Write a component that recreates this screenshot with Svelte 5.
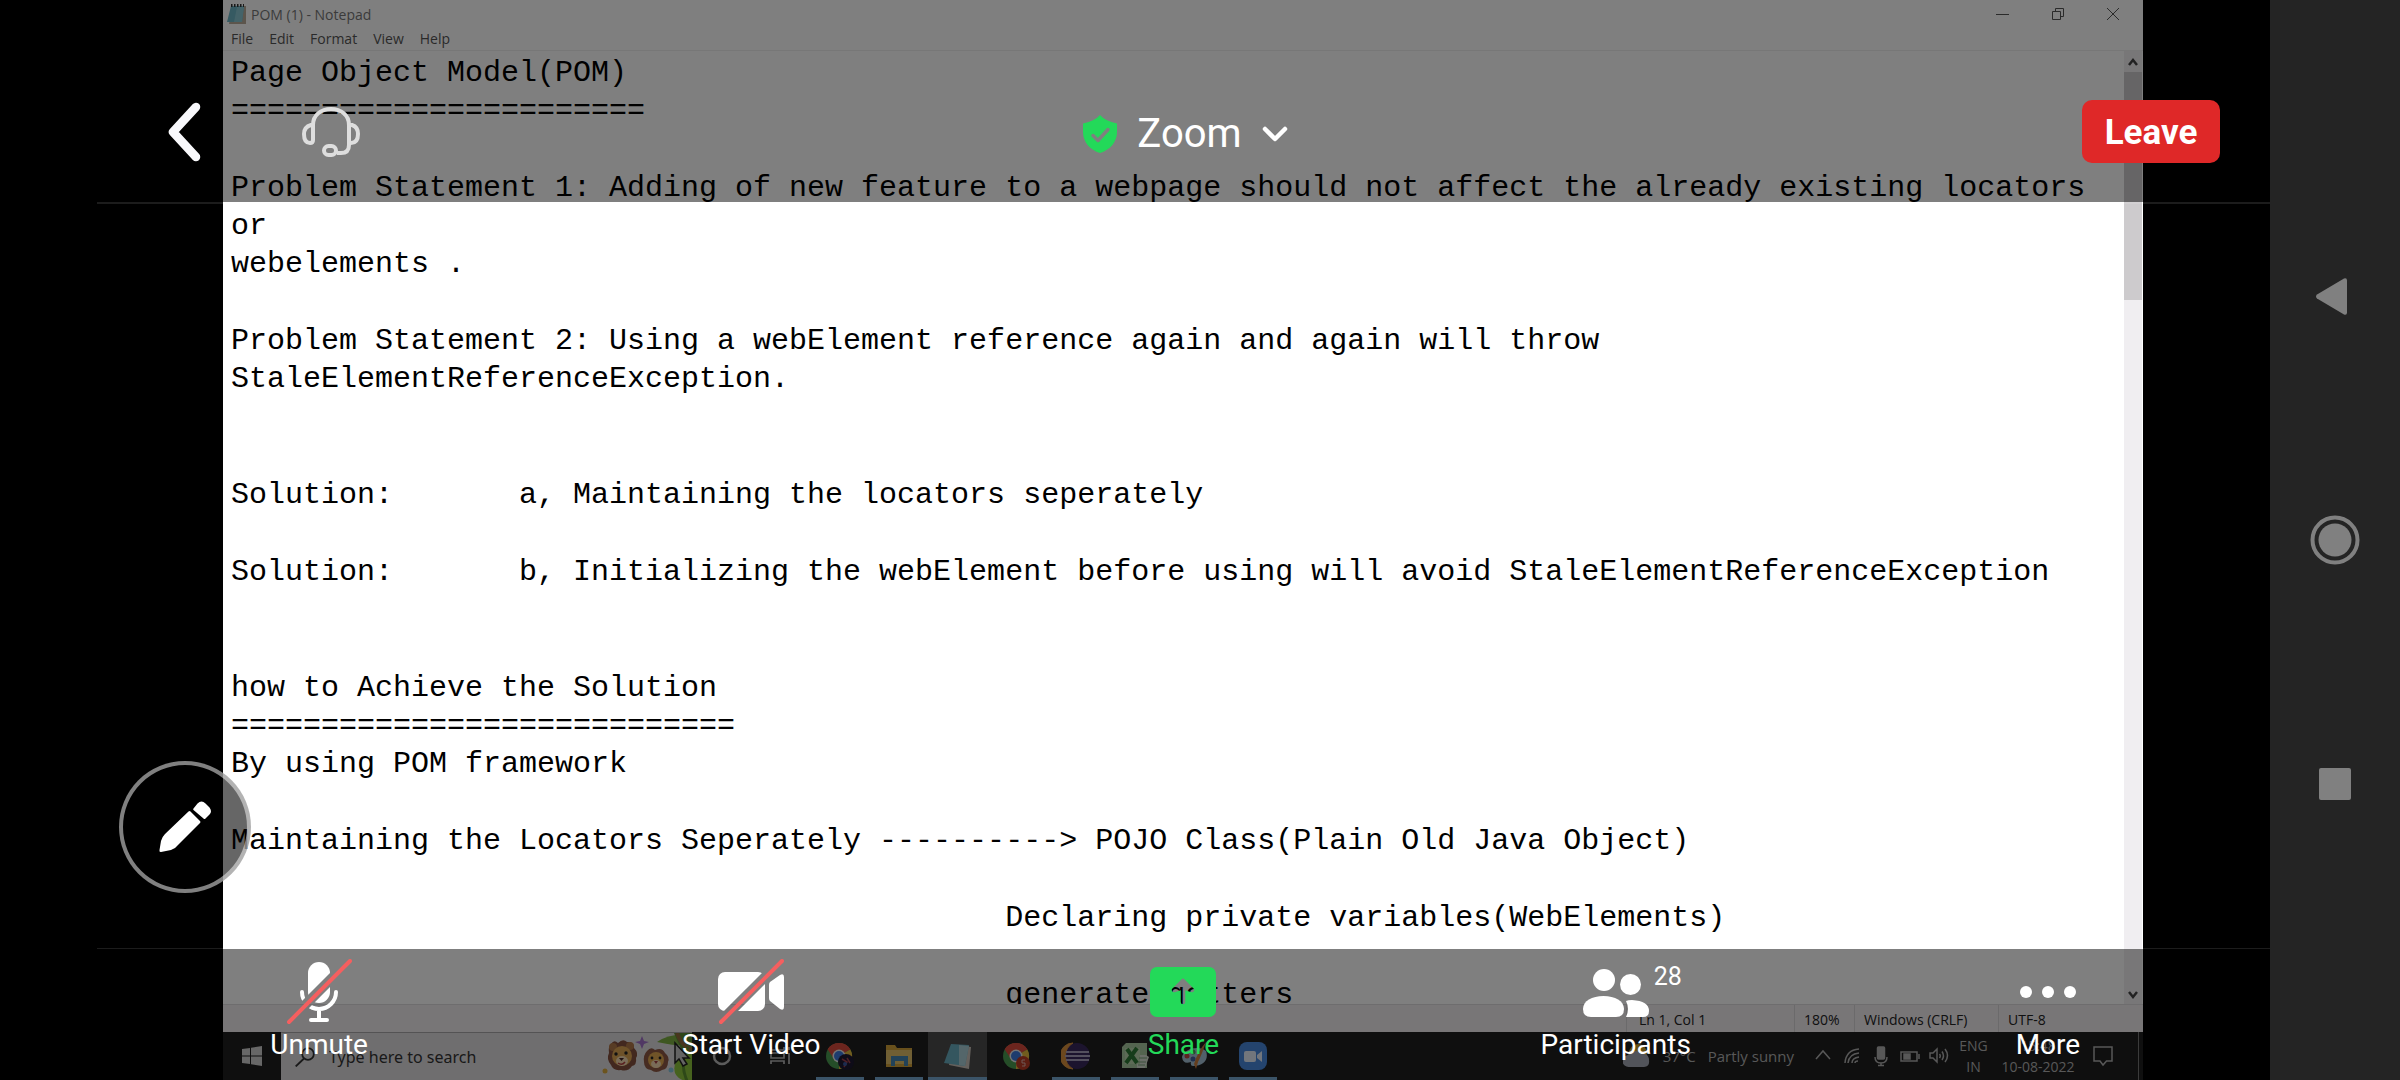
<script>
  const blocks = [
    { lines: ['Page Object Model(POM)', '='.repeat(23)] },
    {
      lines: [
        'Problem Statement 1: Adding of new feature to a webpage should not affect the already existing locators',
        'or',
        'webelements .'
      ]
    },
    {
      lines: [
        'Problem Statement 2: Using a webElement reference again and again will throw',
        'StaleElementReferenceException.'
      ]
    },
    { wide: true, lines: ['Solution:       a, Maintaining the locators seperately'] },
    {
      lines: [
        'Solution:       b, Initializing the webElement before using will avoid StaleElementReferenceException'
      ]
    },
    { wide: true, lines: ['how to Achieve the Solution', '='.repeat(28), 'By using POM framework'] },
    { lines: ['Maintaining the Locators Seperately ----------> POJO Class(Plain Old Java Object)'] },
    { lines: [' '.repeat(43) + 'Declaring private variables(WebElements)'] },
    { lines: [' '.repeat(43) + 'generate getters'] }
  ];
  const menus = ['File', 'Edit', 'Format', 'View', 'Help'];
</script>

{#snippet chrome()}
  <circle cx="14" cy="14" r="13" fill="#4a9a50" />
  <path d="M14 14L2.700 7.500A13 13 0 0 1 25.300 7.500Z" fill="#d84a3c" />
  <path d="M14 14L25.300 7.500A13 13 0 0 1 14 27Z" fill="#e2b93c" />
  <path d="M14 8H25.500A13 13 0 0 0 2.700 7.500L9 17Z" fill="#d84a3c" />
  <circle cx="14" cy="14" r="6.500" fill="#e8e8e8" />
  <circle cx="14" cy="14" r="5" fill="#3c78dc" />
{/snippet}

<div class="device">
  <div class="stage">
    <div class="desktop">
      <section class="notepad" aria-label="Notepad">
        <header class="titlebar">
          <svg class="app-icon" width="19" height="20" viewBox="0 0 19 20" aria-hidden="true">
            <path d="M5 2h14v18H2z" fill="#b8aa98" />
            <path d="M4 2h13l-2 16H0z" fill="#6cb4c4" />
            <path d="M10 3h7l-2 15H7z" fill="#88c6d2" />
            <path d="M4 1.500h13" stroke="#333" stroke-width="3" stroke-dasharray="1.500 1.500" />
          </svg>
          <span class="title">POM (1) - Notepad</span>
          <div class="window-buttons">
            <button aria-label="Minimize"><svg width="14" height="14" viewBox="0 0 14 14"><path d="M0 7.500h13" /></svg></button>
            <button aria-label="Restore"><svg width="14" height="14" viewBox="0 0 14 14"><path d="M1.500 4.500h8v8h-8zM4.500 4V1.500h8v8H10" /></svg></button>
            <button aria-label="Close"><svg width="14" height="14" viewBox="0 0 14 14"><path d="M1 1l12 12M13 1L1 13" /></svg></button>
          </div>
        </header>
        <nav class="menubar">
          {#each menus as m}<button>{m}</button>{/each}
        </nav>
        <div class="editor">
          <article class="document">
            {#each blocks as b}
              <div class="block" class:wide={b.wide}>
                {#each b.lines as line}<p>{line}</p>{/each}
              </div>
            {/each}
          </article>
          <div class="scrollbar">
            <svg width="18" height="21" viewBox="0 0 18 21"><path d="M5 14l4-5 4 5" /></svg>
            <div class="thumb"></div>
            <svg width="18" height="21" viewBox="0 0 18 21"><path d="M5 9l4 5 4-5" /></svg>
          </div>
        </div>
        <footer class="statusbar">
          <span class="position">Ln 1, Col 1</span>
          <span class="zoom-level">180%</span>
          <span class="ending">Windows (CRLF)</span>
          <span class="encoding">UTF-8</span>
        </footer>
      </section>

      <section class="taskbar" aria-label="Taskbar">
        <button class="start" aria-label="Start">
          <svg width="20" height="20" viewBox="0 0 20 20"><path d="M0 3l8-1v7.500H0zM9 1.800L20 0v9.500H9zM0 10.500h8V18l-8-1zM9 10.500h11V20L9 18.200z" fill="#cfcfcf" /></svg>
        </button>
        <div class="search">
          <svg width="20" height="20" viewBox="0 0 20 20" fill="none" stroke="#333" stroke-width="1.800"><circle cx="13" cy="7" r="5.800" /><path d="M9 11.500L.7 19.500" /></svg>
          <input type="text" aria-label="Search" placeholder="Type here to search" />
          <svg class="lions" width="90" height="48" viewBox="0 0 90 48" aria-hidden="true">
            <path d="M55 9Q70-1 90 3V12Q78 14 55 9Z" fill="#7cae42" />
            <path d="M72 0l7 16 11 10V0z" fill="#5c8c34" />
            <path d="M75 0q4 12 15 17" stroke="#936c3c" stroke-width="4" fill="none" />
            <path d="M90 20Q69 24 73 40q4 9 17 8z" fill="#8cc43c" />
            <path d="M86 14q-9 15-1 34" stroke="#5c9030" stroke-width="3" fill="none" />
            <path d="M9 11q3-5 7-1 5-5 9-1 7-1 7 6 5 5 2 10 1 7-4 8-4 6-11 4-8 1-10-5-5-6-2-12-1-6 2-9z" fill="#84503e" />
            <circle cx="11" cy="14" r="4" fill="#b07848" /><circle cx="28" cy="13" r="4" fill="#b07848" />
            <ellipse cx="20" cy="23" rx="10" ry="10" fill="#dca452" />
            <ellipse cx="20" cy="28" rx="6" ry="5" fill="#f2d8b0" />
            <circle cx="14" cy="21" r="1.700" fill="#222" /><circle cx="24" cy="20" r="1.700" fill="#222" />
            <path d="M17 25h5l-2.500 3z" fill="#422" /><path d="M16 30q4 3 7-1" stroke="#b03c3c" stroke-width="1.500" fill="none" />
            <path d="M45 18q4-5 8-1 7-3 10 3 5 4 3 9 0 7-6 8-6 4-11 0-7-1-7-8-1-7 3-11z" fill="#8e5844" />
            <ellipse cx="54" cy="27" rx="8" ry="8" fill="#e0a850" />
            <ellipse cx="54" cy="31" rx="5" ry="4" fill="#f4d8b0" />
            <circle cx="50" cy="25" r="1.400" fill="#222" /><circle cx="58" cy="25" r="1.400" fill="#222" />
            <path d="M52 28h4l-2 3z" fill="#a03c3c" />
            <path d="M40 3l2 5 5 1-5 2-2 5-2-5-5-2 5-1z" fill="#a070c8" />
            <circle cx="3" cy="38" r="2.500" fill="#d8a83c" /><circle cx="69" cy="37" r="2.500" fill="#84c4dc" />
            <path d="M73 10v20l4-4 4 7 4-2-4-6h6z" fill="#c8c8c8" stroke="#222" stroke-width="1.500" />
          </svg>
        </div>
        <div class="apps">
          <button class="app" aria-label="Cortana"><svg width="28" height="28" viewBox="0 0 28 28"><circle cx="14" cy="14" r="8" fill="none" stroke="#b8b8b8" stroke-width="2.500" /></svg></button>
          <button class="app" aria-label="Task View"><svg width="28" height="28" viewBox="0 0 28 28" fill="none" stroke="#b8b8b8" stroke-width="1.700"><path d="M4 5v3h13V5M4 22v-3h13v3M4 11h13v5H4zM22 5v3M22 11v11" /></svg></button>
          <button class="app open" aria-label="Chrome"><svg width="30" height="28" viewBox="0 0 30 28">{@render chrome()}<circle cx="21" cy="20" r="8" fill="#1c1830" /><path d="M17 17l5 3-3 5M22 16l3 5" stroke="#9a3c4c" stroke-width="1.500" fill="none" /><circle cx="20" cy="22" r="2" fill="#3858a0" /></svg></button>
          <button class="app open" aria-label="File Explorer"><svg width="28" height="28" viewBox="0 0 28 28"><path d="M1 3h9l2 3h15v19H1z" fill="#d0a038" /><path d="M1 8h26v14H1z" fill="#e0be68" /><path d="M6 14h17v10h-4v-5h-9v5H6z" fill="#4484b0" /></svg></button>
          <button class="app open active" aria-label="Notepad"><svg width="30" height="28" viewBox="0 0 30 28"><path d="M9 3l19 2-2 22L6 23z" fill="#c8c0b8" /><path d="M8 2l18 1-4 21L1 21z" fill="#68acbe" /><path d="M16 3l10 1-4 20-6-1z" fill="#a8ccd4" /></svg></button>
          <button class="app" aria-label="Chrome, second profile"><svg width="30" height="28" viewBox="0 0 30 28">{@render chrome()}<circle cx="21" cy="21" r="7" fill="#b83a24" /><path d="M23 18h-3v3h3v3h-3" stroke="#ddb0a8" stroke-width="1" fill="none" /></svg></button>
          <button class="app open" aria-label="Eclipse"><svg width="30" height="28" viewBox="0 0 30 28"><circle cx="16" cy="14" r="13" fill="#38285c" /><path d="M12 1A13 13 0 0 0 12 27A15 15 0 0 1 12 1Z" fill="#d8903c" stroke="#d8903c" /><path d="M5 10h23M4 14h25M5 18h23" stroke="#a8a0bc" stroke-width="2" /></svg></button>
          <button class="app open" aria-label="Excel"><svg width="28" height="28" viewBox="0 0 28 28"><path d="M5 1h21v25H1V5z" fill="#a8c8a0" /><path d="M16 13h9l3 2-4 11h-8z" fill="#d4dcd0" /><path d="M4 6h15v16H4z" fill="#b8d4ac" /><path d="M6 7l10 14M16 6L5 21" stroke="#2c7834" stroke-width="4" /><path d="M18 16h8M17 20h8M17 23h7" stroke="#78a078" /></svg></button>
          <button class="app open" aria-label="Paint"><svg width="28" height="28" viewBox="0 0 28 28"><path d="M2 15C4 6 20 3 26 9c3 8-2 15-13 15q-3 0-2-4-8 3-9-5z" fill="#a4c0d4" /><circle cx="7" cy="14" r="2.500" fill="#b84840" /><circle cx="13" cy="10" r="2.500" fill="#50945c" /><circle cx="13" cy="17" r="2.500" fill="#40609c" /><path d="M26 0q-4 12-8 20l-2 7-2-5Q18 9 26 0z" fill="#c87c3c" /></svg></button>
          <button class="app open" aria-label="Zoom"><svg width="28" height="28" viewBox="0 0 28 28"><rect width="28" height="28" rx="8" fill="#4888dc" /><rect x="5" y="9" width="12" height="11" rx="2" fill="#e4ecf8" /><path d="M18 13l5-4v11l-5-4z" fill="#e4ecf8" /></svg></button>
        </div>
        <div class="tray">
          <button class="weather">
            <svg width="28" height="24" viewBox="0 0 28 24"><circle cx="15" cy="9" r="9" fill="#c8a028" /><path d="M6 23a6 6 0 0 1-1-12 8 8 0 0 1 13-1 6 6 0 0 1 8 6q1 7-5 7z" fill="#a4a8b4" /></svg>
            <span>37°C</span><span>Partly sunny</span>
          </button>
          <button class="tray-icon" aria-label="Hidden icons"><svg width="20" height="22" viewBox="0 0 20 22"><path d="M3 14l7-8 7 8" /></svg></button>
          <button class="tray-icon" aria-label="Network"><svg width="20" height="22" viewBox="0 0 20 22"><path d="M3 18Q4 5 17 4M6 18Q7 9 17 8M10 18Q10 13 17 12M13 18q0-2 3-2" /></svg></button>
          <button class="tray-icon" aria-label="Microphone"><svg width="20" height="22" viewBox="0 0 20 22"><rect x="6.500" y="2" width="7" height="12" rx="1" fill="#b0b0b0" /><path d="M4 12q0 6 6 6t6-6M10 18v3M7 20.500h6" /></svg></button>
          <button class="tray-icon" aria-label="Battery"><svg width="20" height="22" viewBox="0 0 20 22"><path d="M1 7h16v9H1zM19 9v5" /><rect x="4" y="9" width="6" height="5" fill="#b0b0b0" /></svg></button>
          <button class="tray-icon" aria-label="Volume"><svg width="20" height="22" viewBox="0 0 20 22"><path d="M1 8v5h3l4 4V4L4 8zM10.500 9q1.500 2 0 4M13 6.500q3 4.500 0 8.500M16 4q5 6.500 0 13" /></svg></button>
          <div class="stack lang"><span>ENG</span><span>IN</span></div>
          <div class="stack clock"><span>15:48</span><span>10-08-2022</span></div>
          <button class="notifications" aria-label="Notifications"><svg width="20" height="22" viewBox="0 0 20 22"><path d="M1 2h18v14h-5.500L10 20l-3-4H1z" /></svg></button>
          <button class="show-desktop" aria-label="Show desktop"></button>
        </div>
      </section>
    </div>

    <header class="meeting-top">
      <div class="top-left">
        <button aria-label="Back">
          <svg width="34" height="60" viewBox="0 0 34 60"><path d="M28 5L5 30l23 25" fill="none" stroke="#f8f8fb" stroke-width="8.500" stroke-linecap="round" stroke-linejoin="round" /></svg>
        </button>
        <button aria-label="Audio source">
          <svg width="58" height="50" viewBox="0 0 58 50" fill="none" stroke="#dedede" stroke-width="4" stroke-linejoin="round">
            <path d="M11 18C11 8 19 2 29 2s18 6 18 16v20q0 8-8 8h-4" />
            <path d="M11 18H9q-7 2-7 9 0 9 6 9 3 0 3-3zM47 18h3q6 2 6 9 0 9-7 9h-2z" />
            <rect x="22" y="39" width="12" height="9" rx="4.500" />
          </svg>
        </button>
      </div>
      <button class="meeting-title">
        <svg width="34" height="38" viewBox="0 0 34 38">
          <mask id="shield-check"><rect width="34" height="38" fill="#fff" /><path d="M10 20.500l5 5L25 14.500" fill="none" stroke="#000" stroke-width="3.500" stroke-linecap="round" stroke-linejoin="round" /></mask>
          <path d="M17 0Q22 6 34 8.500V17C34 27 27 35 17 38 7 35 0 27 0 17V8.500Q12 6 17 0Z" fill="#23d959" mask="url(#shield-check)" />
        </svg>
        <span>Zoom</span>
        <svg width="26" height="18" viewBox="0 0 26 18"><path d="M3 4l10 10L23 4" fill="none" stroke="#fff" stroke-width="4.500" stroke-linecap="round" stroke-linejoin="round" /></svg>
      </button>
      <div class="top-right"><button class="leave">Leave</button></div>
    </header>

    <button class="annotate" aria-label="Annotate">
      <svg width="52" height="52" viewBox="0 0 52 52" fill="#fff">
        <path d="M29.500 10.500q1-1 2 0l9.500 9.500q1 1 0 2L19 44q-3 4-7 5L2 51q-2 .3-1.500-2L2 40q1-4 4-7z" />
        <path d="M34.500 7.500l4-5q4-4 8 0l4 4q3 4 0 7l-4 4q-1 1-2 0l-10-8.500q-.7-.7 0-1.500z" />
      </svg>
    </button>

    <nav class="meeting-bottom" aria-label="Meeting controls">
      <button>
        <svg width="66" height="66" viewBox="0 0 66 66">
          <mask id="mic-cut"><rect width="66" height="66" fill="#fff" /><path d="M-3 68L69-4" stroke="#000" stroke-width="10" /></mask>
          <g mask="url(#mic-cut)">
            <rect x="22" y="3" width="22" height="41" rx="11" fill="#fff" />
            <path d="M16 33a17 17 0 0 0 34 0M33 50v10M25 61h16" fill="none" stroke="#fff" stroke-width="4" stroke-linecap="round" />
          </g>
          <path d="M3 63L64 2" stroke="#f55f5f" stroke-width="4" stroke-linecap="round" />
        </svg>
        <span>Unmute</span>
      </button>
      <button>
        <svg width="66" height="66" viewBox="0 0 66 66">
          <mask id="video-cut"><rect width="66" height="66" fill="#fff" /><path d="M-3 68L69-4" stroke="#000" stroke-width="10" /></mask>
          <rect y="13" width="47" height="39" rx="7" fill="#fff" mask="url(#video-cut)" />
          <path d="M52 23l10-7q4-2 4 2v30q0 4-4 2l-10-8q-1-1-1-3V26q0-2 1-3z" fill="#fff" />
          <path d="M3 63L64 2" stroke="#f55f5f" stroke-width="4" stroke-linecap="round" />
        </svg>
        <span>Start Video</span>
      </button>
      <button class="share">
        <svg width="66" height="66" viewBox="0 0 66 66">
          <mask id="arrow-cut"><rect width="66" height="66" fill="#fff" /><path d="M33 30v13M33 22l9 9-9-3-9 3z" fill="#000" stroke="#000" stroke-width="4.500" stroke-linecap="round" stroke-linejoin="round" /></mask>
          <rect y="8" width="66" height="50" rx="7" fill="#23d959" mask="url(#arrow-cut)" />
        </svg>
        <span>Share</span>
      </button>
      <button class="participants">
        <svg width="66" height="66" viewBox="0 0 66 66" fill="#fff">
          <circle cx="21" cy="21" r="11" /><circle cx="47.500" cy="25.500" r="10.500" />
          <path d="M0 50C0 42 9 37 20.500 37S41 42 41 50q0 8-8 8H8q-8 0-8-8z" />
          <path d="M43 42q2-1 6-1 17 1 17 11 0 6-6 6H43q4-8 0-16z" />
        </svg>
        <span class="count">28</span>
        <span>Participants</span>
      </button>
      <button>
        <svg width="66" height="66" viewBox="0 0 66 66" fill="#fff"><circle cx="11" cy="33" r="6" /><circle cx="33" cy="33" r="6" /><circle cx="55" cy="33" r="6" /></svg>
        <span>More</span>
      </button>
    </nav>
  </div>

  <aside class="system-nav" aria-label="System navigation">
    <button aria-label="Back"><svg width="50" height="50" viewBox="0 0 50 50" fill="#808080"><path d="M7 23.500L34 7.500q3-1 3 2v32q0 3-3 2L7 27.500q-2-2 0-4z" /></svg></button>
    <button aria-label="Home"><svg width="50" height="50" viewBox="0 0 50 50"><circle cx="25" cy="25" r="22.500" fill="none" stroke="#808080" stroke-width="4" /><circle cx="25" cy="25" r="16.500" fill="#808080" /></svg></button>
    <button aria-label="Recent apps"><svg width="50" height="50" viewBox="0 0 50 50"><rect x="9" y="9" width="32" height="32" rx="2" fill="#808080" /></svg></button>
  </aside>
</div>

<style>
  :global(body) { background: #000; }
  button { border: 0; padding: 0; margin: 0; background: none; color: inherit; font: inherit; cursor: pointer; }
  svg { display: block; flex: none; }

  .device { display: flex; min-height: 100vh; background: #000; font-family: Roboto, "Liberation Sans", sans-serif; }
  .stage { position: relative; flex: 1; min-width: 0; display: flex; padding: 0 127px 0 223px; }
  .desktop { flex: 1; min-width: 0; height: 100vh; display: flex; flex-direction: column; background: #fff; font-family: "Open Sans", "Noto Sans", sans-serif; font-size: 14px; overflow: hidden; }

  .notepad { flex: 1; min-height: 0; display: flex; flex-direction: column; color: #333; }
  .titlebar { display: flex; align-items: center; height: 28px; padding-left: 4px; gap: 5px; color: #777; }
  .window-buttons { display: flex; margin-left: auto; padding-right: 3px; }
  .window-buttons button { width: 55px; height: 26px; display: grid; place-items: center; }
  .window-buttons svg { fill: none; stroke: #555; stroke-width: 1; }
  .menubar { display: flex; gap: 16px; height: 22px; padding-left: 8px; border-bottom: 1px solid #eee; color: #555; line-height: 22px; }

  .editor { flex: 1; min-height: 0; display: flex; }
  .document { flex: 1; min-width: 0; padding: 3px 0 0 8px; overflow: hidden; color: #000; font-family: "Liberation Mono", monospace; font-size: 30px; line-height: 38px; }
  .block + .block { margin-top: 39px; }
  .block + .block.wide { margin-top: 78px; }
  .document p { margin: 0; white-space: pre; }
  .scrollbar { width: 18px; margin-right: 1px; display: flex; flex-direction: column; background: #f0eef1; }
  .scrollbar svg { fill: none; stroke: #444; stroke-width: 2.500; }
  .thumb { height: 228px; margin-bottom: auto; background: #cdcbcd; }

  .statusbar { display: flex; justify-content: flex-end; height: 28px; box-sizing: border-box; border-top: 1px solid #dcdadc; background: #f0ecef; color: #222; line-height: 29px; }
  .statusbar span { box-sizing: border-box; padding-left: 9px; border-left: 1px solid #d6d4d6; white-space: nowrap; }
  .statusbar .position { width: 168px; padding-left: 12px; }
  .zoom-level { width: 60px; }
  .ending { width: 144px; }
  .encoding { width: 145px; }

  .taskbar { display: flex; height: 48px; background: #1e1e1e; color: #b0b0b0; }
  .start { width: 58px; display: grid; place-items: center; }
  .search { width: 411px; box-sizing: border-box; display: flex; align-items: center; padding-left: 14px; gap: 14px; border-top: 1px solid #a8a6a8; background: #dfdddf; overflow: hidden; }
  .search input { flex: 1; min-width: 0; border: 0; padding: 0; outline: 0; background: none; font: 16px "Noto Sans", "Open Sans", sans-serif; color: #333; }
  .search input::placeholder { color: #333; opacity: 1; }
  .apps { display: flex; }
  .app { width: 59px; box-sizing: border-box; display: flex; flex-direction: column; align-items: center; justify-content: space-between; padding-top: 10px; }
  .app::after { content: ""; width: 48px; height: 3px; }
  .app.open::after { background: #76a9d0; }
  .app.active { background: #4c4c4c; }
  .app.active::after { width: 100%; }
  .tray { display: flex; align-items: center; margin-left: auto; }
  .tray svg { fill: none; stroke: #b0b0b0; stroke-width: 1.500; }
  .tray .weather svg { stroke: none; }
  .weather { display: flex; align-items: center; gap: 12px; padding-right: 14px; font-size: 15px; white-space: nowrap; }
  .tray-icon { width: 29px; display: grid; place-items: center; }
  .stack { display: flex; flex-direction: column; align-items: center; line-height: 21px; }
  .lang { width: 41px; }
  .clock { width: 88px; }
  .notifications { width: 42px; display: grid; place-items: center; }
  .show-desktop { width: 5px; height: 48px; margin-left: 14px; border-left: 1px solid #777; }

  .meeting-top { position: absolute; top: 0; left: 97px; right: 0; box-sizing: border-box; display: grid; grid-template-columns: 1fr auto 1fr; align-items: center; padding: 100px 50px 39px; background: rgba(0, 0, 0, 0.5); color: #fff; }
  .meeting-top::after { content: ""; position: absolute; top: 100%; left: 0; right: 0; height: 2px; background: rgba(255, 255, 255, 0.11); }
  .top-left { display: flex; align-items: center; gap: 100px; padding-left: 21px; }
  .meeting-title { display: flex; align-items: center; gap: 20px; padding: 4px 0 0 4px; font-size: 40px; line-height: 48px; }
  .top-right { display: flex; justify-content: flex-end; }
  .leave { width: 138px; height: 63px; padding-top: 2px; border-radius: 10px; background: #df2828; font-size: 35px; font-weight: 700; }

  .annotate { position: absolute; left: 119px; bottom: 187px; width: 132px; height: 132px; box-sizing: border-box; display: grid; place-items: center; border: 4px solid rgba(255, 255, 255, 0.5); border-radius: 50%; background: rgba(0, 0, 0, 0.6); }

  .meeting-bottom { position: absolute; bottom: 0; left: 97px; right: 0; box-sizing: border-box; display: grid; grid-template-columns: repeat(5, 1fr); padding: 10px 6px 19px; background: rgba(0, 0, 0, 0.5); color: #fff; font-size: 28px; line-height: 32px; }
  .meeting-bottom::before { content: ""; position: absolute; bottom: 100%; left: 0; right: 0; height: 1px; background: rgba(255, 255, 255, 0.11); }
  .meeting-bottom button { position: relative; display: flex; flex-direction: column; align-items: center; gap: 4px; }
  .meeting-bottom .share { color: #23d959; }
  .count { position: absolute; left: calc(50% + 38px); top: 2px; font-size: 25px; }

  .system-nav { width: 130px; display: flex; flex-direction: column; align-items: center; justify-content: center; gap: 194px; background: #242424; }
</style>
